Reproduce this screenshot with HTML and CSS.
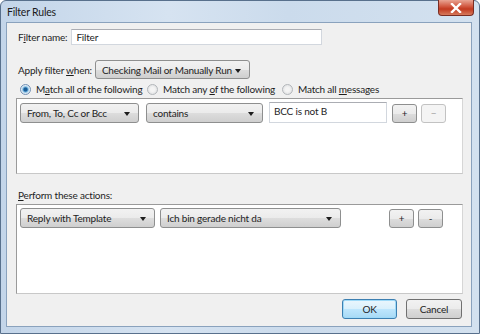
FILE: index.html
```html
<!DOCTYPE html>
<html lang="en">
<head>
  <meta charset="UTF-8" />
  <title>Filter Rules</title>
  <link rel="stylesheet" href="styles.css">
</head>
<body>
  <div class="window">
    <div class="titlebar">
      <span class="title">Filter Rules</span>
      <div class="close">
        <svg width="12" height="10" viewBox="0 0 12 10">
          <path d="M2 1 L10 9 M10 1 L2 9" stroke="#fff" stroke-width="2.4" stroke-linecap="square"/>
        </svg>
      </div>
    </div>

    <div class="client">
      <div class="row name-row">
        <label class="lbl">F<u>i</u>lter name:</label>
        <div class="textbox name-box">Filter</div>
      </div>

      <div class="row when-row">
        <label class="lbl">Apply filter <u>w</u>hen:</label>
        <div class="combo when-combo">Checking Mail or Manually Run<span class="arrow"></span></div>
      </div>

      <div class="row radio-row">
        <span class="radio checked"></span><span class="radio-lbl r1">M<u>a</u>tch all of the following</span>
        <span class="radio"></span><span class="radio-lbl r2">Match any <u>o</u>f the following</span>
        <span class="radio"></span><span class="radio-lbl">Match all <u>m</u>essages</span>
      </div>

      <div class="listbox rules">
        <div class="item">
          <div class="combo c-field">From, To, Cc or Bcc<span class="arrow"></span></div>
          <div class="combo c-op">contains<span class="arrow"></span></div>
          <div class="textbox c-value">BCC is not B</div>
          <div class="small-btn plus">+</div>
          <div class="small-btn disabled">&minus;</div>
        </div>
      </div>

      <div class="section-lbl"><u>P</u>erform these actions:</div>

      <div class="listbox actions">
        <div class="item">
          <div class="combo a-type">Reply with Template<span class="arrow"></span></div>
          <div class="combo a-target">Ich bin gerade nicht da<span class="arrow"></span></div>
          <div class="small-btn a-plus">+</div>
          <div class="small-btn">-</div>
        </div>
      </div>

      <div class="footer">
        <div class="button default">OK</div>
        <div class="button">Cancel</div>
      </div>
    </div>
  </div>
</body>
</html>
```

FILE: styles.css
```css
body {
  margin: 0;
  width: 480px;
  height: 334px;
  overflow: hidden;
  font-family: Lato, "Noto Sans", sans-serif;
  font-size: 10px;
  letter-spacing: -0.2px;
  color: #1e1e1e;
  background: #fff;
}

u {
  text-decoration-thickness: 1px;
  text-underline-offset: 1px;
}

.window {
  box-sizing: border-box;
  width: 480px;
  height: 334px;
  display: flex;
  flex-direction: column;
  border: 1px solid #58708c;
  border-radius: 6px 6px 0 0;
  background: linear-gradient(90deg, #c3d5e9 0%, #d6e3f1 35%, #cbdbec 60%, #d3e1ef 100%);
  padding: 0 7px 6px 5px;
}

.titlebar {
  height: 21px;
  display: flex;
  align-items: center;
  position: relative;
}

.title {
  padding-left: 1px;
  font-size: 10.5px;
  color: #1a1a1a;
}

.close {
  position: absolute;
  top: -1px;
  right: -2px;
  width: 34px;
  height: 15px;
  display: flex;
  align-items: center;
  justify-content: center;
  border: 1px solid #7a2d22;
  border-top: none;
  border-radius: 0 0 4px 4px;
  background: linear-gradient(#e9a493 0%, #d0543c 45%, #c23a20 60%, #d67a5c 100%);
}

.client {
  flex: 1;
  display: flex;
  flex-direction: column;
  border: 1px solid #8aa2bd;
  background: #f0f0f0;
  padding: 6px 8px 7px 9px;
}

.row {
  display: flex;
  align-items: center;
}

.lbl {
  padding-left: 2px;
}

.textbox {
  box-sizing: border-box;
  background: #fff;
  border: 1px solid #d2d7de;
  border-top-color: #abadb3;
  padding: 0 4px;
  display: flex;
  align-items: center;
}

.name-box {
  width: 251px;
  height: 16px;
  margin-left: 4px;
}

.when-row {
  margin-top: 15px;
}

.combo {
  box-sizing: border-box;
  position: relative;
  height: 20px;
  display: flex;
  align-items: center;
  padding: 0 6px;
  border: 1px solid #8e8f8f;
  border-radius: 3px;
  background: linear-gradient(#f2f2f2 0%, #ebebeb 50%, #dddddd 51%, #cfcfcf 100%);
  white-space: nowrap;
}

.arrow {
  position: absolute;
  right: 8px;
  top: 8px;
  border-left: 3.5px solid transparent;
  border-right: 3.5px solid transparent;
  border-top: 4px solid #1e1e1e;
}

.when-combo {
  width: 155px;
  margin-left: 3px;
  height: 19px;
}

.radio-row {
  margin-top: 2px;
  height: 16px;
  padding-left: 4px;
}

.radio {
  box-sizing: border-box;
  width: 11px;
  height: 11px;
  border-radius: 50%;
  border: 1px solid #b2b6ba;
  background: radial-gradient(circle, #f4f4f4 30%, #d8dadc 100%);
  margin-right: 5px;
}

.radio.checked {
  border-color: #7290b4;
  background: radial-gradient(circle, #1c5d97 0 25%, #6fb3df 40%, #dde9f3 60%);
}

.r1 { width: 111px; }
.r2 { width: 119px; }

.listbox {
  box-sizing: border-box;
  background: #fff;
  border: 1px solid #9a9a9a;
  border-right-color: #d6d6d6;
  border-bottom-color: #c8c8c8;
}

.rules {
  margin-top: 1px;
  height: 76px;
  padding: 4px 3px;
}

.item {
  display: flex;
  align-items: center;
}

.c-field { width: 119px; }
.c-op { width: 117px; margin-left: 7px; }

.c-value {
  width: 118px;
  height: 21px;
  margin-left: 6px;
  align-self: flex-start;
  margin-top: -1px;
  align-items: flex-start;
  padding-top: 2px;
}

.small-btn {
  box-sizing: border-box;
  width: 25px;
  height: 19px;
  display: flex;
  align-items: center;
  justify-content: center;
  border: 1px solid #8e8f8f;
  border-radius: 3px;
  background: linear-gradient(#f2f2f2 0%, #ebebeb 50%, #dddddd 51%, #cfcfcf 100%);
  margin-left: 4px;
  font-size: 10px;
}

.plus { margin-left: 5px; }

.small-btn.disabled {
  border-color: #c2c2c2;
  background: #f4f4f4;
  color: #a0a0a0;
}

.section-lbl {
  margin-top: 15px;
  padding-left: 2px;
  height: 15px;
}

.actions {
  margin-top: 0;
  height: 90px;
  padding: 3px 3px;
}

.a-type { width: 135px; }
.a-target { width: 181px; margin-left: 5px; }
.a-plus { margin-left: 48px; }

.footer {
  margin-top: auto;
  display: flex;
  justify-content: flex-end;
  gap: 9px;
  padding-right: 1px;
}

.button {
  box-sizing: border-box;
  width: 56px;
  height: 20px;
  display: flex;
  align-items: center;
  justify-content: center;
  border: 1px solid #707070;
  border-radius: 3px;
  background: linear-gradient(#f2f2f2 0%, #ebebeb 50%, #dddddd 51%, #cfcfcf 100%);
}

.button.default {
  width: 55px;
  border-color: #3c7fb1;
  box-shadow: inset 0 0 0 1px #9fdaf8;
  background: linear-gradient(#eaf6fd 0%, #d9f0fc 50%, #bee6fd 51%, #a7d9f5 100%);
}
```
